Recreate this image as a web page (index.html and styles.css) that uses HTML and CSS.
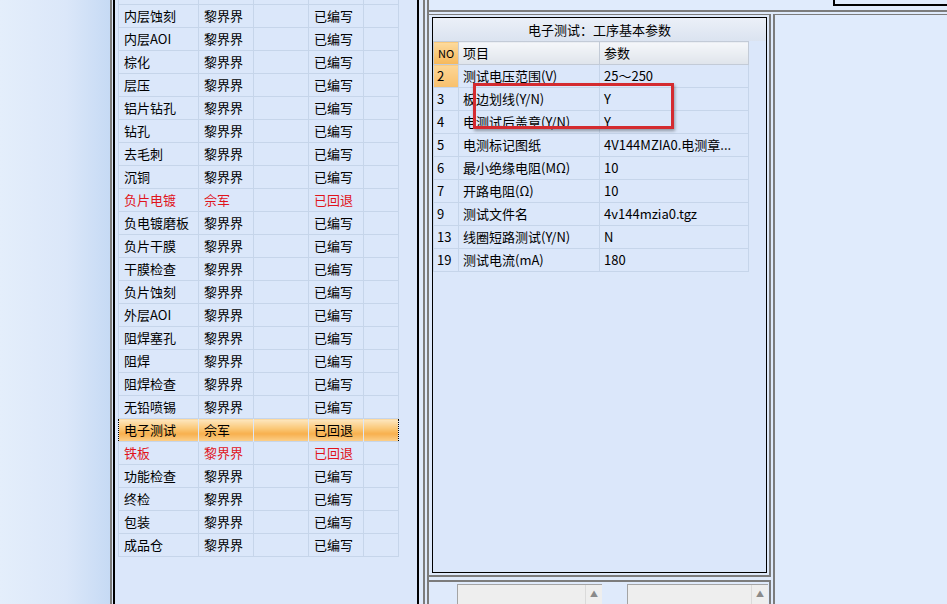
FILE: index.html
```html
<!DOCTYPE html>
<html lang="zh-CN">
<head>
  <meta charset="UTF-8" />
  <title>工序参数</title>
  <link rel="stylesheet" href="styles.css">
</head>
<body>
  <!-- 左侧空白导航区 -->
  <div class="sidebar"></div>

  <!-- 工序列表 -->
  <div class="list-frame">
    <div class="list-box">
      <table class="flow-table">
        <tr class="cut"><td></td><td></td><td></td><td></td><td></td></tr>
        <tr><td>内层蚀刻</td><td>黎界界</td><td></td><td>已编写</td><td></td></tr>
        <tr><td>内层AOI</td><td>黎界界</td><td></td><td>已编写</td><td></td></tr>
        <tr><td>棕化</td><td>黎界界</td><td></td><td>已编写</td><td></td></tr>
        <tr><td>层压</td><td>黎界界</td><td></td><td>已编写</td><td></td></tr>
        <tr><td>铝片钻孔</td><td>黎界界</td><td></td><td>已编写</td><td></td></tr>
        <tr><td>钻孔</td><td>黎界界</td><td></td><td>已编写</td><td></td></tr>
        <tr><td>去毛刺</td><td>黎界界</td><td></td><td>已编写</td><td></td></tr>
        <tr><td>沉铜</td><td>黎界界</td><td></td><td>已编写</td><td></td></tr>
        <tr class="back"><td>负片电镀</td><td>佘军</td><td></td><td>已回退</td><td></td></tr>
        <tr><td>负电镀磨板</td><td>黎界界</td><td></td><td>已编写</td><td></td></tr>
        <tr><td>负片干膜</td><td>黎界界</td><td></td><td>已编写</td><td></td></tr>
        <tr><td>干膜检查</td><td>黎界界</td><td></td><td>已编写</td><td></td></tr>
        <tr><td>负片蚀刻</td><td>黎界界</td><td></td><td>已编写</td><td></td></tr>
        <tr><td>外层AOI</td><td>黎界界</td><td></td><td>已编写</td><td></td></tr>
        <tr><td>阻焊塞孔</td><td>黎界界</td><td></td><td>已编写</td><td></td></tr>
        <tr><td>阻焊</td><td>黎界界</td><td></td><td>已编写</td><td></td></tr>
        <tr><td>阻焊检查</td><td>黎界界</td><td></td><td>已编写</td><td></td></tr>
        <tr><td>无铅喷锡</td><td>黎界界</td><td></td><td>已编写</td><td></td></tr>
        <tr class="selected"><td>电子测试</td><td>佘军</td><td></td><td>已回退</td><td></td></tr>
        <tr class="back"><td>铁板</td><td>黎界界</td><td></td><td>已回退</td><td></td></tr>
        <tr><td>功能检查</td><td>黎界界</td><td></td><td>已编写</td><td></td></tr>
        <tr><td>终检</td><td>黎界界</td><td></td><td>已编写</td><td></td></tr>
        <tr><td>包装</td><td>黎界界</td><td></td><td>已编写</td><td></td></tr>
        <tr><td>成品仓</td><td>黎界界</td><td></td><td>已编写</td><td></td></tr>
      </table>
    </div>
  </div>

  <!-- 右侧主区域 -->
  <div class="main">
    <div class="topbar">
      <div class="topbox"></div>
    </div>
    <div class="work">
      <div class="mid">
        <div class="mid-frame">
          <div class="param-box">
            <div class="param-title">电子测试：工序基本参数</div>
            <table class="param-table">
              <tr class="head"><th class="no">NO</th><th>项目</th><th>参数</th></tr>
              <tr class="current"><td class="no">2</td><td>测试电压范围(V)</td><td>25～250</td></tr>
              <tr><td class="no">3</td><td>板边划线(Y/N)</td><td>Y</td></tr>
              <tr><td class="no">4</td><td>电测试后盖章(Y/N)</td><td>Y</td></tr>
              <tr><td class="no">5</td><td>电测标记图纸</td><td>4V144MZIA0.电测章...</td></tr>
              <tr><td class="no">6</td><td>最小绝缘电阻(MΩ)</td><td>10</td></tr>
              <tr><td class="no">7</td><td>开路电阻(Ω)</td><td>10</td></tr>
              <tr><td class="no">9</td><td>测试文件名</td><td>4v144mzia0.tgz</td></tr>
              <tr><td class="no">13</td><td>线圈短路测试(Y/N)</td><td>N</td></tr>
              <tr><td class="no">19</td><td>测试电流(mA)</td><td>180</td></tr>
            </table>
            <!-- 红色标注框 -->
            <div class="mark"></div>
          </div>
        </div>
        <div class="mid-bottom">
          <div class="memo"><span class="scroll">▲</span></div>
          <div class="memo wide"><span class="scroll">▲</span></div>
        </div>
      </div>
      <div class="side"></div>
    </div>
  </div>
</body>
</html>
```

FILE: styles.css
```css
html, body {
  margin: 0;
  padding: 0;
}
body {
  width: 947px;
  height: 604px;
  overflow: hidden;
  display: flex;
  background: #dfeafb;
  font-family: "Noto Sans CJK SC", sans-serif;
  font-size: 13px;
  color: #000;
}
.sidebar {
  width: 110px;
  flex: none;
  background: linear-gradient(to right, #e4eefb 0%, #dbe7f9 60%, #c6daf4 100%);
}
/* 工序列表 */
.list-frame {
  width: 315px;
  box-sizing: border-box;
  flex: none;
  margin-right: 2px;
  border-left: 2px solid #7c7c7c;
  border-right: 2px solid #7c7c7c;
  padding: 0 4px 0 1px;
  background: #dfeafb;
}
.list-box {
  height: 100%;
  box-sizing: border-box;
  border-left: 2px solid #000;
  border-right: 2px solid #000;
  padding-left: 3px;
  background: #dbe7fa;
  overflow: hidden;
}
.flow-table {
  border-collapse: collapse;
  margin-top: -19px;
  table-layout: fixed;
  width: 280px;
}
.flow-table td {
  height: 22px;
  padding: 0 0 0 5px;
  border: 1px solid #c6d5ea;
  line-height: 22px;
  white-space: nowrap;
  overflow: hidden;
}
.flow-table td:nth-child(1) { width: 74px; }
.flow-table td:nth-child(2) { width: 49px; }
.flow-table td:nth-child(3) { width: 49px; }
.flow-table td:nth-child(4) { width: 49px; }
.flow-table td:nth-child(5) { width: 29px; }
.flow-table tr.back td {
  color: #e0141c;
}
.flow-table tr.selected td {
  background: linear-gradient(to bottom, #fde7c0 0%, #fbc979 40%, #f7b04e 65%, #fcd08c 100%);
  border-color: transparent;
  border-top: 1px dotted #000;
  border-bottom: 1px dotted #000;
}
.flow-table tr.selected td:first-child { border-left: 1px dotted #000; }
.flow-table tr.selected td:last-child { border-right: 1px dotted #000; }

/* 右侧 */
.main {
  flex: 1;
  display: flex;
  flex-direction: column;
  border-left: 2px solid #7c7c7c;
}
.topbar {
  height: 10px;
  flex: none;
  display: flex;
  justify-content: flex-end;
  border-bottom: 2px solid #7c7c7c;
  background: #e0ebfc;
}
.topbox {
  width: 112px;
  height: 4px;
  border-left: 2px solid #000;
  border-bottom: 2px solid #000;
}
.work {
  flex: 1;
  display: flex;
  padding-top: 2px;
}
.mid {
  width: 342px;
  flex: none;
  display: flex;
  flex-direction: column;
}
.mid-frame {
  flex: 1;
  border-top: 1px solid #7c7c7c;
  border-right: 2px solid #7c7c7c;
  border-bottom: 2px solid #7c7c7c;
  padding: 2px 2px 2px 3px;
  display: flex;
}
.param-box {
  position: relative;
  flex: 1;
  border: 1px solid #000;
  background: #dbe7fa;
}
.param-title {
  height: 23px;
  line-height: 23px;
  text-align: center;
  background: linear-gradient(to bottom, #ebf0f8, #dbe3f0);
}
.param-table {
  border-collapse: collapse;
  table-layout: fixed;
  width: 316px;
}
.param-table th,
.param-table td {
  height: 22px;
  line-height: 22px;
  padding: 0 0 0 4px;
  border: 1px solid #c6d5ea;
  text-align: left;
  font-weight: normal;
  white-space: nowrap;
  overflow: hidden;
}
.param-table th:nth-child(1) { width: 24px; }
.param-table th:nth-child(2) { width: 136px; }
.param-table th:nth-child(3) { width: 144px; }
.param-table .head th {
  background: linear-gradient(to bottom, #f5f7fa, #dfe4eb);
  border-color: #c3cbd7;
}
.param-table .head th.no {
  background: linear-gradient(to bottom, #fddb9e, #f6b85a);
  text-align: center;
  padding: 0;
  font-size: 11px;
}
.param-table tr.current td.no {
  background: linear-gradient(to bottom, #fcd696, #f8c06c);
}
.param-table td.no {
  padding-left: 3px;
}
.mark {
  position: absolute;
  left: 40px;
  top: 65px;
  width: 201px;
  height: 46px;
  box-sizing: border-box;
  border: 3px solid #d42b30;
  box-shadow: 1px 2px 3px rgba(0, 0, 0, 0.35);
}
/* 底部备注框 */
.mid-bottom {
  height: 20px;
  flex: none;
  margin-top: 3px;
  border-top: 2px solid #7c7c7c;
  border-right: 2px solid #7c7c7c;
  padding: 2px 0 0 28px;
  display: flex;
  gap: 25px;
}
.memo {
  width: 145px;
  box-sizing: border-box;
  border-top: 1px solid #a4a4a4;
  border-left: 1px solid #a4a4a4;
  background: #eeeeee;
  display: flex;
  justify-content: flex-end;
}
.memo.wide {
  width: 141px;
}
.scroll {
  width: 16px;
  border-left: 1px solid #dadada;
  color: #8a8a8a;
  font-size: 8px;
  text-align: center;
  line-height: 18px;
}
.side {
  flex: 1;
  margin-left: 2px;
  border-left: 2px solid #7c7c7c;
  border-top: 1px solid #7c7c7c;
  background: #e0ebfc;
}
```
